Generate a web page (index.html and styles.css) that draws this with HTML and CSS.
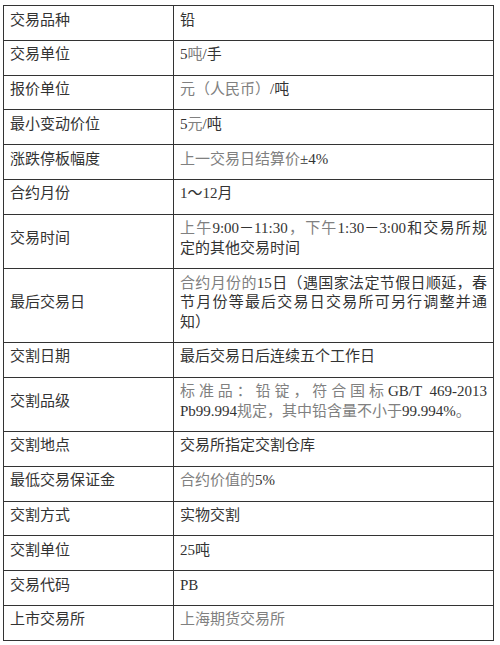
FILE: index.html
```html
<!DOCTYPE html>
<html lang="zh-CN">
<head>
<meta charset="utf-8">
<title>铅期货合约</title>
<link rel="stylesheet" href="styles.css">
</head>
<body>
<div class="spec">
  <div class="k">交易品种</div><div class="v">铅</div>
  <div class="k">交易单位</div><div class="v"><span class="t">5</span><span class="g">吨</span><span class="t">/</span>手</div>
  <div class="k">报价单位</div><div class="v"><span class="g">元（人民币）</span><span class="t">/</span>吨</div>
  <div class="k">最小变动价位</div><div class="v"><span class="t">5</span><span class="g">元</span><span class="t">/</span>吨</div>
  <div class="k">涨跌停板幅度</div><div class="v"><span class="g">上一交易日结算价</span><span class="t">±4%</span></div>
  <div class="k">合约月份</div><div class="v"><span class="t">1</span>～<span class="t">12</span>月</div>
  <div class="k">交易时间</div><div class="v"><span class="g">上午</span><span class="t">9:00</span>－<span class="t">11:30</span><span class="g">，</span><span class="g">下午</span><span class="t">1:30</span>－<span class="t">3:00</span>和交易所规定的其他交易时间</div>
  <div class="k">最后交易日</div><div class="v"><span class="g">合约月份的</span><span class="t">15</span>日（遇国家法定节假日顺延，春节月份等最后交易日交易所可另行调整并通知）</div>
  <div class="k">交割日期</div><div class="v">最后交易日后连续五个工作日</div>
  <div class="k">交割品级</div><div class="v"><span class="g">标准品：铅锭，符合国标</span><span class="t">GB/T 469-2013 Pb99.994</span><span class="g">规定，其中铅含量不小于</span><span class="t">99.994%</span><span class="g">。</span></div>
  <div class="k">交割地点</div><div class="v">交易所指定交割仓库</div>
  <div class="k">最低交易保证金</div><div class="v"><span class="g">合约价值的</span><span class="t">5%</span></div>
  <div class="k">交割方式</div><div class="v">实物交割</div>
  <div class="k">交割单位</div><div class="v"><span class="t">25</span>吨</div>
  <div class="k">交易代码</div><div class="v"><span class="t">PB</span></div>
  <div class="k">上市交易所</div><div class="v"><span class="g">上海期货交易所</span></div>
</div>
</body>
</html>
```
FILE: styles.css
```css
html, body {
  margin: 0;
  padding: 0;
  background: #ffffff;
}

body {
  padding: 5px 0 0 3px;
  font-family: "Noto Sans CJK SC", sans-serif;
  font-size: 15px;
  color: #333333;
}

.spec {
  display: grid;
  grid-template-columns: 170px 320px;
  width: 491px;
  box-sizing: border-box;
  border-top: 1px solid #333333;
  border-left: 1px solid #333333;
}

.k,
.v {
  box-sizing: border-box;
  border-right: 1px solid #333333;
  border-bottom: 1px solid #333333;
  padding: 2.5px 6px 11.8px 6px;
  line-height: 19.5px;
}

.k {
  display: flex;
  align-items: center;
}

.v {
  text-align: justify;
}

.t {
  font-family: "Liberation Serif", "Noto Sans CJK SC", serif;
  color: #333333;
  line-height: 16px;
}

.g {
  color: #808080;
}
```
